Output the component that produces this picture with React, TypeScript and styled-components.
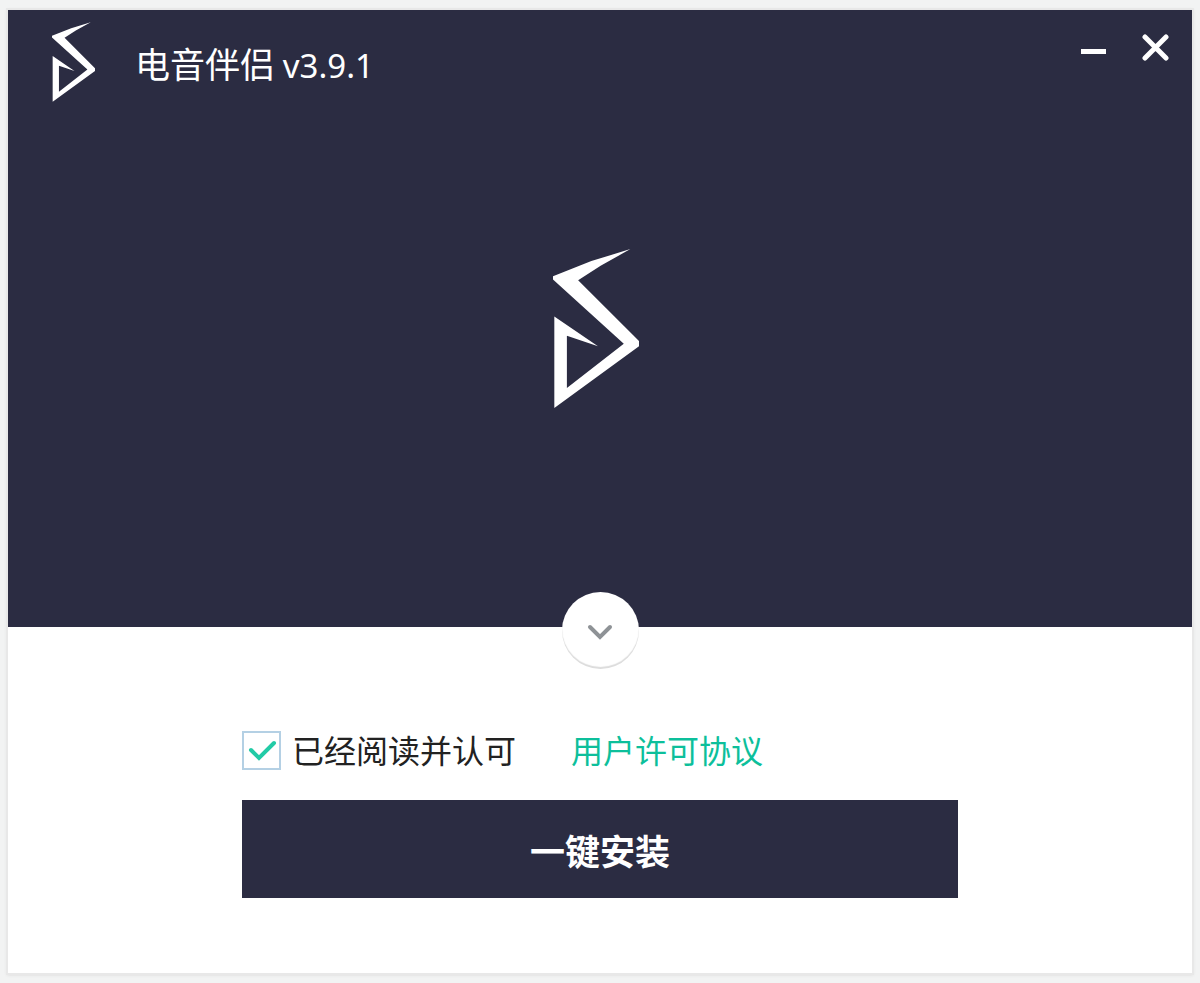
import React, { useState } from "react";
import styled, { createGlobalStyle } from "styled-components";

const navy = "#2b2c42";

const GlobalStyle = createGlobalStyle`
  *, *::before, *::after { box-sizing: border-box; }
  body {
    margin: 0;
    background: #f2f3f3;
    font-family: "Noto Sans CJK SC", "Noto Sans", sans-serif;
    color: #222;
  }
  button { font-family: inherit; }
`;

const Page = styled.div`
  display: flex;
  flex-direction: column;
  min-height: 100vh;
  padding: 10px 8px;
`;

const InstallerWindow = styled.main`
  flex: 1;
  display: flex;
  flex-direction: column;
  background: #fff;
  box-shadow: 0 0 0 2px #e8e8e8, 0 1px 3px 1px #d8d8d8;
`;

const Hero = styled.section`
  display: flex;
  flex-direction: column;
  background: ${navy};
  padding-bottom: 219px;
`;

const TitleBar = styled.header`
  display: flex;
  align-items: flex-start;
  height: 100px;
  padding: 12px 16px 0 44px;
`;

const Title = styled.h1`
  flex: 1;
  margin: 16px 0 0 40px;
  font-size: 35px;
  line-height: 50px;
  font-weight: 400;
  color: #fff;
`;

const Version = styled.span`
  font-family: "Noto Sans", sans-serif;
  font-size: 33px;
`;

const WindowButtons = styled.div`
  display: flex;
  gap: 20px;
  padding-top: 5px;
`;

const WindowButton = styled.button`
  display: flex;
  align-items: center;
  justify-content: center;
  width: 42px;
  height: 40px;
  padding: 0;
  border: 0;
  background: none;
  color: #fff;
  cursor: pointer;
`;

const HeroLogo = styled.div`
  display: flex;
  justify-content: center;
  padding: 139px 8px 0 0;
`;

const Panel = styled.section`
  display: flex;
  flex-direction: column;
  align-items: center;
  padding: 0 24px 72px;
`;

const ExpandButton = styled.button`
  position: relative;
  display: flex;
  align-items: center;
  justify-content: center;
  width: 77px;
  height: 77px;
  margin-top: -35px;
  padding: 2px 0 0;
  border: 0;
  border-radius: 50%;
  background: #fff;
  box-shadow: inset 0 -2px 1px #dcdcdc;
  cursor: pointer;
`;

const Form = styled.form`
  display: flex;
  flex-direction: column;
  gap: 26px;
  width: 100%;
  max-width: 716px;
  margin-top: 57px;
`;

const AgreementRow = styled.div`
  display: flex;
  align-items: center;
  gap: 55px;
  height: 48px;
  font-size: 32px;
  line-height: 46px;
`;

const CheckLabel = styled.label`
  display: flex;
  align-items: center;
  gap: 11px;
  white-space: nowrap;
  cursor: pointer;
`;

const LabelText = styled.span`
  padding-bottom: 2px;
`;

const CheckBox = styled.span`
  display: grid;
  width: 39px;
  height: 39px;

  & > * { grid-area: 1 / 1; }
  & > svg { pointer-events: none; }
  & > input:not(:checked) + svg { visibility: hidden; }
`;

const CheckInput = styled.input`
  appearance: none;
  width: 39px;
  height: 39px;
  margin: 0;
  border: 2px solid #b4d0e4;
  background: #fff;
`;

const AgreementLink = styled.a`
  padding-bottom: 2px;
  color: #0dbf9b;
  text-decoration: none;
  white-space: nowrap;
`;

const InstallButton = styled.button`
  height: 98px;
  padding: 2px 0 0;
  border: 0;
  background: ${navy};
  color: #fff;
  font-size: 35px;
  line-height: 50px;
  font-weight: 700;
  cursor: pointer;
`;

function Logo({ width, height }: { width: number; height: number }) {
  return (
    <svg width={width} height={height} viewBox="0 0 130 240" fill="#fff" aria-hidden="true">
      <path d="M117 0 L58 18 L0 41 L0 46 L107 143 L21 210 L21 131 L68 147 L2 102 L2 240 L130 147 L130 139 L38 47 L72 25 Z" />
    </svg>
  );
}

export default function App() {
  const [accepted, setAccepted] = useState(true);

  return (
    <Page>
      <GlobalStyle />
      <InstallerWindow>
        <Hero>
          <TitleBar>
            <Logo width={43} height={80} />
            <Title>
              电音伴侣 <Version>v3.9.1</Version>
            </Title>
            <WindowButtons>
              <WindowButton type="button" aria-label="最小化">
                <svg width="26" height="26" viewBox="0 0 26 26" aria-hidden="true">
                  <rect x="1" y="15" width="25" height="5" fill="currentColor" />
                </svg>
              </WindowButton>
              <WindowButton type="button" aria-label="关闭">
                <svg width="28" height="28" viewBox="0 0 28 28" aria-hidden="true">
                  <path
                    d="M4 4 L25 25 M25 4 L4 25"
                    stroke="currentColor"
                    strokeWidth="5"
                    strokeLinecap="round"
                  />
                </svg>
              </WindowButton>
            </WindowButtons>
          </TitleBar>
          <HeroLogo>
            <Logo width={86} height={159} />
          </HeroLogo>
        </Hero>
        <Panel>
          <ExpandButton type="button" aria-label="展开选项">
            <svg width="26" height="18" viewBox="0 0 26 18" fill="none" aria-hidden="true">
              <path
                d="M3 4 L13 14 L23 4"
                stroke="#8e9296"
                strokeWidth="4"
                strokeLinecap="round"
              />
            </svg>
          </ExpandButton>
          <Form onSubmit={(event) => event.preventDefault()}>
            <AgreementRow>
              <CheckLabel>
                <CheckBox>
                  <CheckInput
                    type="checkbox"
                    checked={accepted}
                    onChange={(event) => setAccepted(event.target.checked)}
                  />
                  <svg width="39" height="39" viewBox="0 0 39 39" fill="none" aria-hidden="true">
                    <path
                      d="M9 19 L17 27 L32 12"
                      stroke="#22cba6"
                      strokeWidth="4"
                      strokeLinecap="round"
                    />
                  </svg>
                </CheckBox>
                <LabelText>已经阅读并认可</LabelText>
              </CheckLabel>
              <AgreementLink href="#license">用户许可协议</AgreementLink>
            </AgreementRow>
            <InstallButton type="submit">一键安装</InstallButton>
          </Form>
        </Panel>
      </InstallerWindow>
    </Page>
  );
}
